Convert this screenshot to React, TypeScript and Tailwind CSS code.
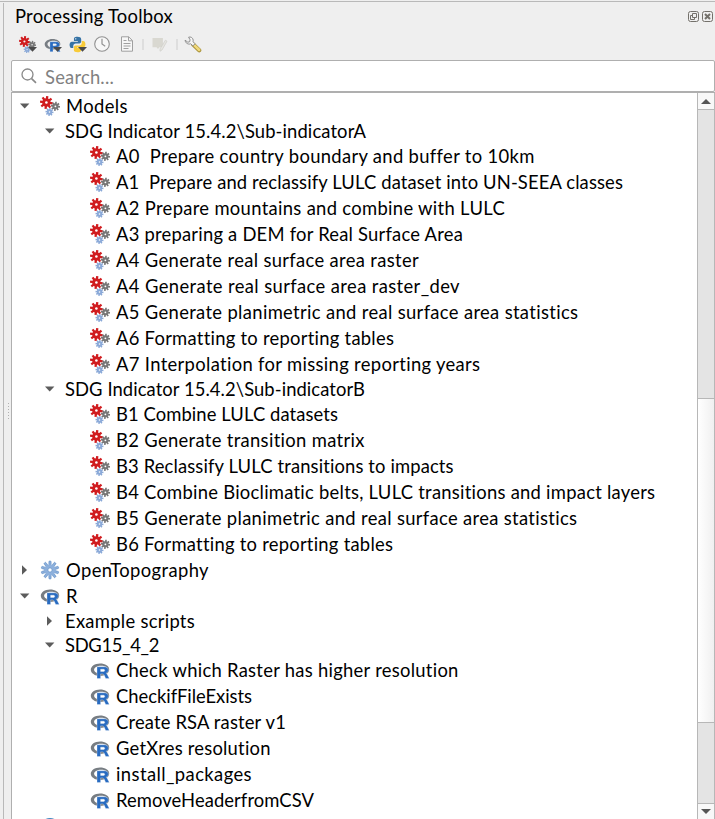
import { useLayoutEffect, useRef, useState } from "react";

type IconKind = "gears" | "cog" | "r" | "none";
type Row = {
  label: string;
  width: number;
  level: 0 | 1 | 2;
  icon: IconKind;
  open?: boolean;
};

const rows: Row[] = [
  { label: "Models", width: 62, level: 0, icon: "gears", open: true },
  { label: "SDG Indicator 15.4.2\\Sub-indicatorA", width: 301, level: 1, icon: "none", open: true },
  { label: "A0  Prepare country boundary and buffer to 10km", width: 418, level: 2, icon: "gears" },
  { label: "A1  Prepare and reclassify LULC dataset into UN-SEEA classes", width: 507, level: 2, icon: "gears" },
  { label: "A2 Prepare mountains and combine with LULC", width: 389, level: 2, icon: "gears" },
  { label: "A3 preparing a DEM for Real Surface Area", width: 347, level: 2, icon: "gears" },
  { label: "A4 Generate real surface area raster", width: 303, level: 2, icon: "gears" },
  { label: "A4 Generate real surface area raster_dev", width: 344, level: 2, icon: "gears" },
  { label: "A5 Generate planimetric and real surface area statistics", width: 463, level: 2, icon: "gears" },
  { label: "A6 Formatting to reporting tables", width: 278, level: 2, icon: "gears" },
  { label: "A7 Interpolation for missing reporting years", width: 365, level: 2, icon: "gears" },
  { label: "SDG Indicator 15.4.2\\Sub-indicatorB", width: 300, level: 1, icon: "none", open: true },
  { label: "B1 Combine LULC datasets", width: 222, level: 2, icon: "gears" },
  { label: "B2 Generate transition matrix", width: 249, level: 2, icon: "gears" },
  { label: "B3 Reclassify LULC transitions to impacts", width: 338, level: 2, icon: "gears" },
  { label: "B4 Combine Bioclimatic belts, LULC transitions and impact layers", width: 540, level: 2, icon: "gears" },
  { label: "B5 Generate planimetric and real surface area statistics", width: 462, level: 2, icon: "gears" },
  { label: "B6 Formatting to reporting tables", width: 277, level: 2, icon: "gears" },
  { label: "OpenTopography", width: 143, level: 0, icon: "cog", open: false },
  { label: "R", width: 11, level: 0, icon: "r", open: true },
  { label: "Example scripts", width: 130, level: 1, icon: "none", open: false },
  { label: "SDG15_4_2", width: 94, level: 1, icon: "none", open: true },
  { label: "Check which Raster has higher resolution", width: 343, level: 2, icon: "r" },
  { label: "CheckifFileExists", width: 136, level: 2, icon: "r" },
  { label: "Create RSA raster v1", width: 170, level: 2, icon: "r" },
  { label: "GetXres resolution", width: 155, level: 2, icon: "r" },
  { label: "install_packages", width: 136, level: 2, icon: "r" },
  { label: "RemoveHeaderfromCSV", width: 198, level: 2, icon: "r" },
];

/* Text whose tracking is adjusted so that it spans the given width. */
function FitText({ text, width, className = "" }: { text: string; width: number; className?: string }) {
  const ref = useRef<HTMLSpanElement>(null);
  const [spacing, setSpacing] = useState(0);
  useLayoutEffect(() => {
    if (ref.current && text.length > 1) {
      setSpacing((width - ref.current.getBoundingClientRect().width) / text.length);
    }
  }, [text, width]);
  return (
    <span ref={ref} className={`inline-block whitespace-pre ${className}`} style={{ letterSpacing: `${spacing}px` }}>
      {text}
    </span>
  );
}

function Gear({ cx, cy, r, color, hole }: { cx: number; cy: number; r: number; color: string; hole: string }) {
  return (
    <g transform={`translate(${cx} ${cy})`}>
      {[0, 45, 90, 135].map((a) => (
        <rect key={a} x={-r * 0.18} y={-r} width={r * 0.36} height={r * 2} fill={color} transform={`rotate(${a + 8})`} />
      ))}
      <circle r={r * 0.66} fill={color} />
      <circle r={r * 0.2} fill={hole} />
    </g>
  );
}

function GearsIcon({ size = 20, hole = "#fff" }: { size?: number; hole?: string }) {
  return (
    <svg width={size} height={size} viewBox="0 0 20 20" className="shrink-0">
      <Gear cx={6.4} cy={6.5} r={6.4} color="#d01c1f" hole={hole} />
      <Gear cx={15.4} cy={10.3} r={4.6} color="#777" hole={hole} />
      <Gear cx={9.5} cy={16} r={4} color="#8aa9d8" hole={hole} />
    </svg>
  );
}

function CogIcon() {
  return (
    <svg width="20" height="20" viewBox="0 0 20 20" className="shrink-0">
      <g transform="translate(10 10)" fill="#8db0dc" stroke="#5d8bc4" strokeWidth="0.6">
        {[0, 36, 72, 108, 144].map((a) => (
          <rect key={a} x="-1.1" y="-8.9" width="2.2" height="17.8" rx="0.6" transform={`rotate(${a})`} />
        ))}
        <circle r="5.4" stroke="none" />
        <circle r="2.1" fill="#fff" />
      </g>
    </svg>
  );
}

function RIcon({ size = 20 }: { size?: number }) {
  return (
    <svg width={size} height={size} viewBox="0 0 20 20" className="shrink-0">
      <path
        fillRule="evenodd"
        fill="#777d83"
        d="M10 3.4c5.2 0 9.2 2.5 9.2 6s-4 6.5-9.2 6.5S.8 13.1.8 9.7s4-6.3 9.2-6.3zm1.1 2.3c-4 0-7 1.8-7 4s3 4 7 4 6.8-1.6 6.8-4-2.8-4-6.8-4z"
      />
      <path
        fillRule="evenodd"
        fill="#286bc0"
        stroke="#fff"
        strokeWidth="0.3"
        d="M7 6.8h7.2c2.8 0 4.2 1.3 4.2 3.3 0 1.7-1 2.8-2.5 3.1.8.3 1.1.8 1.5 1.5l1.9 3.8h-3.6l-1.6-3.4c-.5-.9-.8-1.2-1.8-1.2h-1.7v4.6H7zm3.6 2.4v2.3h2.5c1.1 0 1.6-.4 1.6-1.1s-.5-1.2-1.6-1.2z"
      />
    </svg>
  );
}

function PythonIcon() {
  return (
    <svg width="17" height="17" viewBox="0 0 24 24">
      <path
        fill="#3673a5"
        d="M11.9 1C7.2 1 7 3 7 4.5V7h5.5v1H4.2C1.8 8 .8 10 .8 12.3c0 2.6 1.1 4.8 3.2 4.8h2v-3c0-2 1.6-3.5 3.5-3.5h5.2c1.5 0 2.5-1.2 2.5-2.7V4.5C17.2 2 15 1 11.9 1z"
      />
      <path
        fill="#f8cb39"
        d="M12.2 23c4.6 0 4.8-2 4.8-3.5V17h-5.4v-1h8.2c2.4 0 3.4-2 3.4-4.3 0-2.6-1-4.7-3.2-4.7h-2v2.9c0 2-1.6 3.6-3.5 3.6H9.3c-1.4 0-2.5 1.2-2.5 2.6v3.4C6.8 22 9 23 12.2 23z"
      />
      <circle cx="9.5" cy="4" r="1" fill="#fff" />
    </svg>
  );
}

function MenuArrow() {
  return (
    <svg width="9" height="5" viewBox="0 0 9 5" className="absolute top-[11px] left-[9px]">
      <path d="M0 0h9L4.5 4.8z" fill="#4a4a4a" />
    </svg>
  );
}

function Branch({ open }: { open?: boolean }) {
  return (
    <svg width="10" height="10" viewBox="0 0 10 10" className="shrink-0">
      {open ? <path d="M0 2.5h9.4L4.7 7.5z" fill="#5c5c5c" /> : <path d="M2 .2v9.6l5-4.8z" fill="#5c5c5c" />}
    </svg>
  );
}

function TreeRow({ row }: { row: Row }) {
  const pad = row.level === 0 ? "pl-[8px]" : row.level === 1 ? "pl-[33px]" : "pl-[78px]";
  const height = row.icon === "none" ? "h-[24px]" : "h-[26px]";
  return (
    <div className={`flex shrink-0 items-center ${height} ${pad}`}>
      {row.open !== undefined && <Branch open={row.open} />}
      {row.icon !== "none" && (
        <span className={`flex w-5 ${row.level === 0 ? "ml-[10px]" : ""}`}>
          {row.icon === "gears" && <GearsIcon />}
          {row.icon === "cog" && <CogIcon />}
          {row.icon === "r" && <RIcon />}
        </span>
      )}
      <FitText text={row.label} width={row.width} className={`leading-6 ${row.level === 1 ? "ml-[10px]" : "ml-[6px]"}`} />
    </div>
  );
}

function Toolbar() {
  return (
    <div className="flex h-[28px] items-center pl-[8px]">
      <span className="relative flex h-[17px] w-[25px]">
        <GearsIcon size={17} hole="#efefef" />
        <MenuArrow />
      </span>
      <span className="relative flex h-[17px] w-[25px]">
        <RIcon size={17} />
        <MenuArrow />
      </span>
      <span className="relative flex h-[17px] w-[25px]">
        <PythonIcon />
        <MenuArrow />
      </span>
      <svg width="16" height="16" viewBox="0 0 16 16" fill="none" stroke="#919191">
        <circle cx="8" cy="8" r="7.3" fill="#f7f7f7" strokeWidth="1.1" />
        <path d="M8 2.7V8l3.2 2.2" strokeWidth="1.2" />
      </svg>
      <svg width="14" height="16" viewBox="0 0 14 16" className="ml-[10px]" fill="none" stroke="#a0a0a0">
        <path d="M1.5.8h7.2l3.8 3.8v10.6h-11z" fill="#f7f7f7" />
        <path d="M8.5.8v4h4M3.5 4.5h3M3.5 7.5h7M3.5 10h7M3.5 12.5h5" />
      </svg>
      <span className="ml-[8px] h-[11px] w-[2px] bg-[#dedede]" />
      <svg width="16" height="15" viewBox="0 0 16 15" className="ml-[8px]">
        <path d="M.5 1h10.4v9.2H7.4L6 12l-1.4-1.8H.5z" fill="#d9d8d1" />
        <path d="M13.4 3.2l1.6 1-5 8.8-2 1.2.1-2.3z" fill="#e6e5e1" stroke="#cecec9" strokeWidth=".7" />
      </svg>
      <span className="ml-[8px] h-[11px] w-[2px] bg-[#dedede]" />
      <svg width="18" height="17" viewBox="0 0 18 17" className="ml-[6px]">
        <path d="M9.2 8.5l6 5.8" stroke="#aa933b" strokeWidth="4.2" strokeLinecap="round" />
        <path d="M9.2 8.2l6 5.8" stroke="#f0d97c" strokeWidth="2.5" strokeLinecap="round" />
        <path
          d="M4.6 1.2c2-.8 4.5.6 4.6 3l-.1 1.6 2 2-2.2 2-2.2-2C4.2 8.8 1.2 7 1.1 4.2l2.7 2 1.8-.4.5-2z"
          fill="#f5f5f5"
          stroke="#858585"
          strokeWidth=".9"
        />
      </svg>
    </div>
  );
}

function Scrollbar() {
  return (
    <div className="flex w-[18px] shrink-0 flex-col border-x border-[#b7b7b7] bg-[#e4e4e4]">
      <div className="flex h-[17px] items-center justify-center border-b border-[#b7b7b7] bg-[#f8f8f8]">
        <svg width="10" height="5" viewBox="0 0 10 5">
          <path d="M0 5h10L5 0z" fill="#555" />
        </svg>
      </div>
      <div className="h-[288px]" />
      <div className="h-[325px] border-y border-[#b7b7b7] bg-linear-to-r from-white to-[#f0f0f0]" />
      <div className="h-[80px]" />
      <div className="flex flex-1 justify-center border-t border-[#b7b7b7] bg-[#f8f8f8] pt-[5px]">
        <svg width="10" height="5" viewBox="0 0 10 5">
          <path d="M0 0h10L5 5z" fill="#555" />
        </svg>
      </div>
    </div>
  );
}

export default function App() {
  return (
    <div className="flex h-[819px] w-[715px] flex-col overflow-hidden bg-[#efefef] font-[Lato,sans-serif] text-[18.4px] text-black">
      <div className="h-[2px] shrink-0 border-b border-[#b9b9b9]" />
      <div className="flex min-h-0 flex-1">
        <div className="mt-px flex w-[4px] shrink-0 border-r border-[#b9b9b9]" />
        <div className="flex w-[7px] shrink-0 flex-col items-center justify-center gap-[2px] pl-[2px]">
          {[0, 1, 2, 3, 4, 5].map((i) => (
            <span key={i} className="size-px bg-[#b0b0b0]" />
          ))}
        </div>
        <div className="flex min-w-0 flex-1 flex-col">
          <div className="flex h-[28px] shrink-0 items-center justify-between pr-[2px] pl-[4px]">
            <FitText text="Processing Toolbox" width={158} className="leading-6" />
            <div className="flex gap-[3px]">
              <svg width="11" height="11" viewBox="0 0 11 11" fill="none" stroke="#74716b">
                <rect x=".5" y=".5" width="10" height="10" rx="2" />
                <path d="M4.5 2.5h4v4h-4zM4.5 4.5h-2v4h4v-2" />
              </svg>
              <svg width="11" height="11" viewBox="0 0 11 11" fill="none" stroke="#74716b">
                <rect x=".5" y=".5" width="10" height="10" rx="2" />
                <path d="M3 3l5 5M8 3L3 8" strokeWidth="2" />
              </svg>
            </div>
          </div>
          <Toolbar />
          <div className="mt-[2px] flex h-[32px] shrink-0 items-center rounded-[2px] border border-[#afafaf] bg-white pl-[9px]">
            <svg width="16" height="16" viewBox="0 0 16 16" fill="none" stroke="#898989" strokeWidth="1.3">
              <circle cx="6.5" cy="6.5" r="5.5" />
              <path d="M10.6 10.6l4.4 4.2" strokeWidth="1.7" />
            </svg>
            <FitText text="Search..." width={69} className="ml-[8px] pt-[2px] leading-6 text-[#818181]" />
          </div>
          <div className="flex min-h-0 flex-1 border-t border-l border-[#afafaf] bg-white">
            <div className="flex min-w-0 flex-1 flex-col overflow-hidden">
              {rows.map((row, i) => (
                <TreeRow key={i} row={row} />
              ))}
              <div className="h-[26px] shrink-0 pt-[5px] pl-[28px]">
                <svg width="20" height="20" viewBox="0 0 20 20">
                  <circle cx="10" cy="10" r="10" fill="#4386c0" />
                </svg>
              </div>
            </div>
            <Scrollbar />
          </div>
        </div>
      </div>
    </div>
  );
}
